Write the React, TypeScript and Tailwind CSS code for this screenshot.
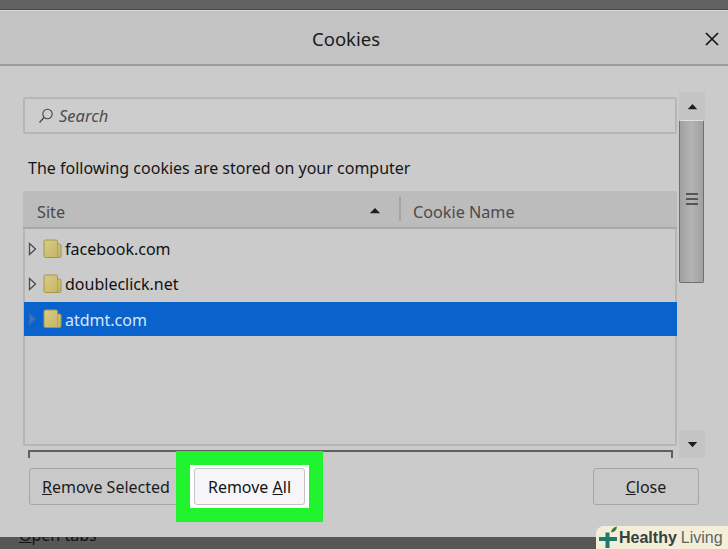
import React from "react";

const font = { fontFamily: '"Noto Sans", "Open Sans", sans-serif' };

function Folder() {
  return (
    <svg width="19" height="20" viewBox="0 0 19 20" className="shrink-0">
      <defs>
        <linearGradient id="fg" x1="0" y1="0" x2="1" y2="1">
          <stop offset="0" stopColor="#d9cc88" />
          <stop offset="1" stopColor="#c4b362" />
        </linearGradient>
      </defs>
      <path d="M1 2.5 Q1 1 2.5 1 H13 Q14.5 1 14.5 2.5 V5 H16.5 Q18 5 18 6.5 V17 Q18 18.5 16.5 18.5 H2.5 Q1 18.5 1 17 Z" fill="url(#fg)" stroke="#a2964f" strokeWidth="1" />
      <path d="M14.5 5 V18.5" stroke="#a99b52" strokeWidth="0.8" />
    </svg>
  );
}

function Twisty({ dim }: { dim?: boolean }) {
  return (
    <svg width="9" height="14" viewBox="0 0 9 14" className="shrink-0">
      <path d="M1.5 1.5 L7.5 7 L1.5 12.5 Z" fill={dim ? "#3f74b8" : "#d2d2d2"} stroke={dim ? "#2f6ab8" : "#4a4a4a"} strokeWidth="1.3" />
    </svg>
  );
}

function Row({ name, selected, tall }: { name: string; selected?: boolean; tall?: boolean }) {
  return (
    <div className={`flex items-center pl-[4px] -ml-[1px] -mr-[2px] ${tall ? "h-[36px]" : selected ? "h-[34px]" : "h-[35px]"} ${selected ? "bg-[#0a63cd] text-[#d8e6f6]" : "text-[#111]"}`}>
      <Twisty dim={selected} />
      <span className="ml-[6px]"><Folder /></span>
      <span className={`ml-[3px] text-[16px] leading-none ${selected ? "mt-[2px]" : ""}`}>{name}</span>
    </div>
  );
}

function Caret({ up, w = 12 }: { up: boolean; w?: number }) {
  return (
    <svg width={w} height="7" viewBox="0 0 14 8" preserveAspectRatio="none">
      <path d={up ? "M7 1 L13 7 H1 Z" : "M1 1 H13 L7 7 Z"} fill="#1e1e1e" />
    </svg>
  );
}

function Logo() {
  return (
    <svg width="22" height="23" viewBox="0 0 22 23" className="shrink-0">
      <path d="M8.5 6.5 H12.5 V11 H20 V15 H12.5 V22 H8.5 V15 H2 V11 H8.5 Z" fill="#1e7b6c" />
      <path d="M14 6.5 Q14.5 1.5 20 0.5 Q19.5 6 14 6.5 Z" fill="#3f7a3a" />
    </svg>
  );
}

export default function App() {
  return (
    <div className="relative w-[728px] h-[549px] overflow-hidden bg-[#5a5a5a] flex flex-col" style={font}>
      <div className="h-[10px] shrink-0 bg-[#626262] border-b border-[#4a4a4a]" />
      <div className="h-[527px] shrink-0 bg-[#cbcbcb] border-t border-[#dadada] flex flex-col">
        <div className="relative h-[55px] shrink-0 bg-[#c3c3c3] border-b-2 border-[#9d9d9d] flex items-center pl-[312px]">
          <span className="text-[18.5px] text-[#1a1a1a] mt-[3px]">Cookies</span>
          <svg width="14" height="14" viewBox="0 0 14 14" className="absolute right-[9px] top-[21px]">
            <path d="M1 1 L13 13 M13 1 L1 13" stroke="#111" strokeWidth="1.6" />
          </svg>
        </div>

        <div className="flex pl-[23px] pt-[26px]">
          <div className="w-[654px] flex flex-col">
            <div className="mt-[5px] h-[37px] flex items-center pl-[13px] border-2 border-[#b6b6b6] rounded-[2px] bg-[#cdcdcd]">
              <svg width="16" height="16" viewBox="0 0 16 16">
                <circle cx="9.5" cy="6" r="4.7" fill="none" stroke="#444" strokeWidth="1.1" />
                <path d="M6 9.5 L1.5 14.5" stroke="#444" strokeWidth="1.2" />
              </svg>
              <span className="ml-[5px] mt-[2px] italic text-[16.5px] text-[#4c4c4c] leading-none">Search</span>
            </div>
            <div className="mt-[23px] ml-[5px] text-[16px] text-[#161616] leading-[22px] h-[22px]">The following cookies are stored on your computer</div>
            <div className="mt-[12px] h-[255px] border-2 border-t-0 border-[#b6b6b6] rounded-[2px] flex flex-col">
              <div className="h-[38px] shrink-0 -mx-[2px] bg-[#bcbcbc] border-b-2 border-[#a8a8a8] rounded-t-[2px] flex items-center text-[16.2px] text-[#4a4a4a]">
                <span className="ml-[14px] mt-[7px] w-[332px]">Site</span>
                <span className="mt-[2px] flex"><Caret up /></span>
                <span className="ml-[18px] w-[2px] h-[24px] bg-[#a4a4a4]" />
                <span className="ml-[12px] mt-[7px]">Cookie Name</span>
              </div>
              <div className="h-[2px] shrink-0" />
              <Row name="facebook.com" />
              <Row name="doubleclick.net" tall />
              <Row name="atdmt.com" selected />
            </div>
          </div>
          <div className="ml-[2px] w-[26px] h-[366px] flex flex-col bg-[#cbcbcb]">
            <div className="h-[28px] shrink-0 bg-[#c4c4c4] flex items-center justify-center"><Caret up w={11} /></div>
            <div className="h-[163px] shrink-0 w-[25px] bg-gradient-to-r from-[#a0a0a0] via-[#b4b4b4] to-[#a0a0a0] border border-[#6f6f6f] border-t-[#e0e0e0] rounded-[2px] flex flex-col items-center pt-[72px] gap-[3px]">
              <span className="w-[12px] h-[2px] bg-[#555]" />
              <span className="w-[12px] h-[2px] bg-[#555]" />
              <span className="w-[12px] h-[2px] bg-[#555]" />
            </div>
            <div className="flex-1 bg-[#cbcbcb]" />
            <div className="h-[28px] shrink-0 bg-[#c4c4c4] flex items-center justify-center"><Caret up={false} w={11} /></div>
          </div>
        </div>

        <div className="relative ml-[28px] w-[645px] h-[8px] -mt-[8px] border-t-2 border-x-2 border-[#5f5f5f]" />

        <div className="flex items-start pl-[29px] pt-[10px]">
          <button className="w-[160px] h-[37px] shrink-0 bg-[#c9c9c9] border border-[#a6a6a6] rounded-[3px] text-left pl-[12px] text-[16px] text-[#1c1c1c]">
            <u>R</u>emove Selected
          </button>
          <div className="relative z-10 -ml-[13px] -mt-[17px] shrink-0 w-[147px] h-[71px] bg-[#1ff42e] flex items-center justify-center">
            <div className="w-[119px] h-[43px] bg-white flex items-center justify-center">
              <button className="w-[111px] h-[37px] bg-[#f6f6f8] border border-[#c4c4c4] rounded-[3px] text-[16px] text-[#141414]">
                Remove <u>A</u>ll
              </button>
            </div>
          </div>
          <button className="ml-[270px] w-[106px] h-[37px] shrink-0 bg-[#c9c9c9] border border-[#a6a6a6] rounded-[3px] text-[16px] text-[#1c1c1c]">
            <u>C</u>lose
          </button>
        </div>
      </div>
      <div className="relative flex-1 bg-[#575757] overflow-hidden">
        <span className="absolute left-[19px] -top-[14px] text-[16px] text-[#111]"><u>O</u>pen tabs</span>
      </div>
      <div className="absolute right-0 bottom-0 w-[132px] h-[23px] bg-[#f4edd8] rounded-tl-[8px] flex items-center pl-[1px]">
        <Logo />
        <span className="text-[16px] font-semibold text-[#33413f] leading-none" style={{ fontFamily: '"Liberation Sans", sans-serif' }}>Healthy</span>
        <span className="ml-[4px] text-[16px] text-[#5b6664] leading-none" style={{ fontFamily: '"Liberation Sans", sans-serif' }}>Living</span>
      </div>
    </div>
  );
}
